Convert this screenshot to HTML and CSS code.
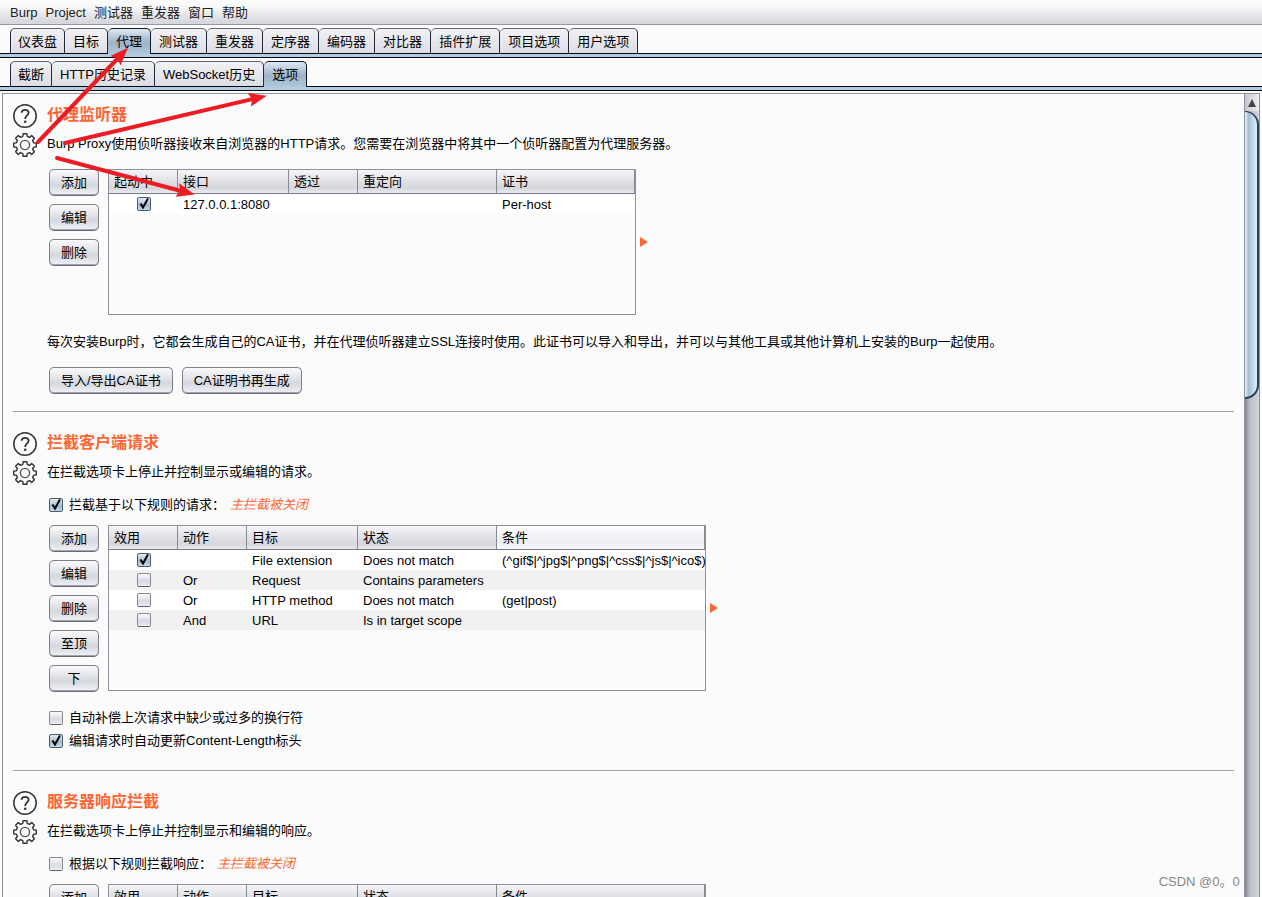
FILE: index.html
```html
<!DOCTYPE html>
<html lang="zh-CN">
<head>
<meta charset="utf-8">
<title>Burp</title>
<link rel="stylesheet" href="styles.css">
</head>
<body>
<svg class="symbols" aria-hidden="true">
  <symbol id="help" viewBox="-12 -12 24 24">
    <circle r="11.2" fill="none" stroke="#333" stroke-width="1.5"/>
    <path d="M-3.4 -3.2C-3.4 -7.2 3.6 -7.2 3.6 -3.2C3.6 -.6 .2 -.4 .2 3" fill="none" stroke="#333" stroke-width="1.8"/>
    <circle cx=".2" cy="5.8" r="1.3" fill="#333"/>
  </symbol>
  <symbol id="gear" viewBox="-12 -12 24 24">
    <path d="M-2.2 -8.6L-1.9 -11.3H1.9L2.2 -8.6L4.5 -7.6L6.7 -9.4L9.4 -6.7L7.6 -4.5L8.6 -2.2L11.3 -1.9V1.9L8.6 2.2L7.6 4.5L9.4 6.7L6.7 9.4L4.5 7.6L2.2 8.6L1.9 11.3H-1.9L-2.2 8.6L-4.5 7.6L-6.7 9.4L-9.4 6.7L-7.6 4.5L-8.6 2.2L-11.3 1.9V-1.9L-8.6 -2.2L-7.6 -4.5L-9.4 -6.7L-6.7 -9.4L-4.5 -7.6Z" fill="none" stroke="#333" stroke-width="1.4" stroke-linejoin="round"/>
    <circle r="4.6" fill="none" stroke="#555" stroke-width="1.4"/>
  </symbol>
</svg>

<div class="app">
  <nav class="menu">
    <button>Burp</button><button>Project</button><button>测试器</button><button>重发器</button><button>窗口</button><button>帮助</button>
  </nav>
  <nav class="tabs">
    <button class="tab">仪表盘</button><button class="tab">目标</button><button class="tab selected">代理</button><button class="tab">测试器</button><button class="tab">重发器</button><button class="tab">定序器</button><button class="tab">编码器</button><button class="tab">对比器</button><button class="tab">插件扩展</button><button class="tab">项目选项</button><button class="tab">用户选项</button>
  </nav>
  <nav class="tabs">
    <button class="tab">截断</button><button class="tab">HTTP历史记录</button><button class="tab">WebSocket历史</button><button class="tab selected">选项</button>
  </nav>

  <div class="panel">
    <main class="content">
      <section class="group">
        <div class="tools">
          <button class="tool" aria-label="帮助"><svg><use href="#help"/></svg></button>
          <button class="tool" aria-label="设置"><svg><use href="#gear"/></svg></button>
        </div>
        <div class="body">
          <h2>代理监听器</h2>
          <p class="desc">Burp Proxy使用侦听器接收来自浏览器的HTTP请求。您需要在浏览器中将其中一个侦听器配置为代理服务器。</p>
          <div class="editor listeners">
            <div class="actions"><button class="btn">添加</button><button class="btn">编辑</button><button class="btn">删除</button></div>
            <div class="grid">
              <table>
                <colgroup><col class="c69"><col class="c111"><col class="c69"><col class="c139"><col></colgroup>
                <thead><tr><th>起动中</th><th>接口</th><th>透过</th><th>重定向</th><th>证书</th></tr></thead>
                <tbody><tr><td class="mark"><input type="checkbox" aria-label="起动中" checked></td><td>127.0.0.1:8080</td><td></td><td></td><td>Per-host</td></tr></tbody>
              </table>
            </div>
            <svg class="arrow" viewBox="0 0 8 10"><path d="M0 0L8 5L0 10Z" fill="#ff6633"/></svg>
          </div>
          <p class="note">每次安装Burp时，它都会生成自己的CA证书，并在代理侦听器建立SSL连接时使用。此证书可以导入和导出，并可以与其他工具或其他计算机上安装的Burp一起使用。</p>
          <div class="buttons"><button class="btn">导入/导出CA证书</button><button class="btn">CA证明书再生成</button></div>
        </div>
      </section>

      <section class="group">
        <div class="tools">
          <button class="tool" aria-label="帮助"><svg><use href="#help"/></svg></button>
          <button class="tool" aria-label="设置"><svg><use href="#gear"/></svg></button>
        </div>
        <div class="body">
          <h2>拦截客户端请求</h2>
          <p class="desc">在拦截选项卡上停止并控制显示或编辑的请求。</p>
          <div class="master"><label class="check"><input type="checkbox" checked>拦截基于以下规则的请求：</label><em>主拦截被关闭</em></div>
          <div class="editor rules">
            <div class="actions"><button class="btn">添加</button><button class="btn">编辑</button><button class="btn">删除</button><button class="btn">至顶</button><button class="btn">下</button></div>
            <div class="grid">
              <table>
                <colgroup><col class="c69"><col class="c69"><col class="c111"><col class="c139"><col></colgroup>
                <thead><tr><th>效用</th><th>动作</th><th>目标</th><th>状态</th><th class="hover">条件</th></tr></thead>
                <tbody>
                  <tr><td class="mark"><input type="checkbox" aria-label="效用" checked></td><td></td><td>File extension</td><td>Does not match</td><td>(^gif$|^jpg$|^png$|^css$|^js$|^ico$)</td></tr>
                  <tr><td class="mark"><input type="checkbox" aria-label="效用"></td><td>Or</td><td>Request</td><td>Contains parameters</td><td></td></tr>
                  <tr><td class="mark"><input type="checkbox" aria-label="效用"></td><td>Or</td><td>HTTP method</td><td>Does not match</td><td>(get|post)</td></tr>
                  <tr><td class="mark"><input type="checkbox" aria-label="效用"></td><td>And</td><td>URL</td><td>Is in target scope</td><td></td></tr>
                </tbody>
              </table>
            </div>
            <svg class="arrow" viewBox="0 0 8 10"><path d="M0 0L8 5L0 10Z" fill="#ff6633"/></svg>
          </div>
          <div class="options">
            <label class="check"><input type="checkbox">自动补偿上次请求中缺少或过多的换行符</label>
            <label class="check"><input type="checkbox" checked>编辑请求时自动更新Content-Length标头</label>
          </div>
        </div>
      </section>

      <section class="group">
        <div class="tools">
          <button class="tool" aria-label="帮助"><svg><use href="#help"/></svg></button>
          <button class="tool" aria-label="设置"><svg><use href="#gear"/></svg></button>
        </div>
        <div class="body">
          <h2>服务器响应拦截</h2>
          <p class="desc">在拦截选项卡上停止并控制显示和编辑的响应。</p>
          <div class="master"><label class="check"><input type="checkbox">根据以下规则拦截响应：</label><em>主拦截被关闭</em></div>
          <div class="editor rules">
            <div class="actions"><button class="btn">添加</button></div>
            <div class="grid">
              <table>
                <colgroup><col class="c69"><col class="c69"><col class="c111"><col class="c139"><col></colgroup>
                <thead><tr><th>效用</th><th>动作</th><th>目标</th><th>状态</th><th>条件</th></tr></thead>
              </table>
            </div>
          </div>
        </div>
      </section>
    </main>
    <div class="scroll">
      <button class="up" aria-label="向上滚动"><svg viewBox="0 0 8 8"><path d="M4 0L8 8H0Z" fill="#444"/></svg></button>
      <div class="track"><div class="thumb"></div></div>
    </div>
  </div>
</div>

<svg class="marks" viewBox="0 0 300 210" aria-hidden="true">
  <defs>
    <marker id="head" viewBox="0 0 18 14" refX="8" refY="7" markerWidth="18" markerHeight="14" markerUnits="userSpaceOnUse" orient="auto"><path d="M0 0L18 7L0 14L3 7Z" fill="#ed1c24"/></marker>
  </defs>
  <g stroke="#ed1c24" stroke-width="4" stroke-linecap="round">
    <line x1="38" y1="142" x2="121" y2="55" marker-end="url(#head)"/>
    <line x1="65" y1="143" x2="257" y2="98" marker-end="url(#head)"/>
    <line x1="57" y1="158" x2="185" y2="192" marker-end="url(#head)"/>
  </g>
</svg>
<div class="watermark">CSDN @0。0 ;</div>
</body>
</html>
```
FILE: styles.css
```css
* { box-sizing: border-box; }

body, button, input {
  font-family: "Liberation Sans", "Noto Sans CJK SC", sans-serif;
  font-size: 13px;
  line-height: 20px;
  color: #000;
}

body { margin: 0; background: #fbfbfb; overflow: hidden; }
button { margin: 0; padding: 0; border: 0; background: none; white-space: nowrap; }
h2, p { margin: 0; }
.symbols { position: absolute; width: 0; height: 0; }

.app { display: flex; flex-direction: column; height: 100vh; }

.menu {
  display: flex;
  gap: 8px;
  height: 25px;
  padding: 3px 10px 1px;
  border-bottom: 1px solid #9297a1;
  background: linear-gradient(#fafcfb, #f8f8f9 30%, #d7d8de 90%);
}
.menu button { color: #222; }

.tabs {
  display: flex;
  flex: none;
  height: 33px;
  padding: 3px 10px 0;
  background: linear-gradient(#000818, #000818) 0 28px / 100% 1px no-repeat,
    linear-gradient(#000818, #000818) 0 32px / 100% 1px no-repeat,
    linear-gradient(#b6cbdd, #b6cbdd) 0 28px / 100% 4px no-repeat;
}
.tab {
  height: 25px;
  padding: 1px 8px 0;
  border: 1px solid #23293a;
  border-width: 1px 1px 0 0;
  border-top-color: #62666e;
  border-radius: 5px 5px 0 0;
  background: linear-gradient(#f2f2f5, #dcdde3);
}
.tab:first-child { border-left-width: 1px; padding: 1px 7px 0; }
.tab.selected {
  height: 26px;
  padding-bottom: 1px;
  border-color: #0c1a2c;
  background: linear-gradient(#dfe8f0, #9db3c8 55%, #b0c6da);
}

.panel {
  display: flex;
  flex: 1;
  min-height: 0;
  margin: 2px 2px 0;
  border: 1px solid #8d919b;
  border-bottom: 0;
}
.content { flex: 1; min-width: 0; overflow: hidden; padding: 10px 10px 0; }

.group {
  display: flex;
  gap: 10px;
  padding-bottom: 17px;
  border-bottom: 1px solid #a2a5ae;
  margin-bottom: 20px;
}
.group:nth-child(2) { padding-bottom: 19px; }
.tools { display: flex; flex-direction: column; gap: 5px; }
.tool, .tool svg { display: block; width: 24px; height: 24px; }
.body { flex: 1; min-width: 0; padding-top: 1px; }
.body h2 { font-size: 16px; line-height: 20px; color: #ff6633; }
.desc { margin-top: 9px; }
.note { margin: 17px 0 15px; }
.master { display: flex; gap: 5px; margin-top: 13px; }
.master em { color: #ff6633; }

.check { display: flex; align-items: center; gap: 6px; padding-left: 2px; }
.options { display: flex; flex-direction: column; gap: 3px; margin-top: 17px; }

input[type="checkbox"] {
  appearance: none;
  flex: none;
  width: 14px;
  height: 14px;
  margin: 0;
  border: 1px solid #858a94;
  border-bottom-color: #5e636d;
  border-radius: 2px;
  background: linear-gradient(#fbfbfd, #d8dae1 60%, #eceef4);
}
input[type="checkbox"]:checked {
  border-color: #4b5c70;
  background: url("data:image/svg+xml,%3Csvg xmlns='http://www.w3.org/2000/svg' viewBox='0 0 12 12'%3E%3Cpath d='M2.5 5.5L5 9.5L10 .5' fill='none' stroke='black' stroke-width='2'/%3E%3C/svg%3E") center / 12px no-repeat,
    linear-gradient(#e2ebf3, #a5bbd0 60%, #c3d8ea);
}

.editor { display: flex; }
.listeners { height: 146px; margin-top: 15px; }
.rules { height: 166px; margin-top: 10px; }
.actions { display: flex; flex-direction: column; gap: 8px; width: 50px; margin: 0 9px 0 2px; }
.btn {
  flex: none;
  height: 27px;
  padding: 1px 11px 0;
  border: 1px solid #7c8089;
  border-bottom-color: #666b76;
  border-radius: 5px;
  box-shadow: inset 0 -1px #a0a4ae;
  background: linear-gradient(#fafafc, #e3e4e9 40%, #d5d7de 60%, #eff1f7);
}
.buttons { display: flex; gap: 9px; padding-left: 2px; }

.grid { border: 1px solid #8d919b; }
.listeners .grid { width: 528px; }
.rules .grid { width: 598px; }
.grid table { width: 100%; table-layout: fixed; border-collapse: separate; border-spacing: 0; }
.grid th, .grid td { padding: 0 0 0 5px; font-weight: normal; text-align: left; white-space: nowrap; }
.grid th {
  height: 24px;
  border-right: 1px solid #858a94;
  border-bottom: 1px solid #747984;
  background: linear-gradient(#f6f6f9, #dfe0e5 50%, #d6d7dd 80%, #eaecf3);
}
.grid th.hover { background: linear-gradient(#fdfdfe, #ecedf2 70%, #f8f9fd); }
.grid td { height: 20px; padding-top: 2px; line-height: 18px; }
.grid tbody tr { background: #fff; }
.grid tbody tr:nth-child(even) { background: #f1f1f1; }
.grid td.mark { padding: 0; text-align: center; }
.mark input { display: block; margin: 0 auto; }
.c69 { width: 69px; }
.c111 { width: 111px; }
.c139 { width: 139px; }
.arrow { flex: none; align-self: center; width: 8px; height: 10px; margin-left: 4px; }

.scroll {
  display: flex;
  flex-direction: column;
  width: 15px;
  border-left: 1px solid #8d919b;
}
.up { height: 17px; background: linear-gradient(90deg, #c5c8d0, #efeff3); }
.up svg { display: block; width: 8px; height: 8px; margin: 0 auto; }
.track { flex: 1; background: linear-gradient(90deg, #85888f, #bcbec5 35%, #d5d6dd); }
.thumb {
  height: 36.6%;
  border: 1px solid #24415b;
  border-width: 1px 2px 2px 0;
  border-radius: 0 14px 14px 0;
  background: linear-gradient(90deg, #eef4f8, #a4bcd2 30%, #c4d8e8 65%, #dcf2fa);
}

.marks { position: absolute; top: 0; left: 0; width: 300px; height: 210px; pointer-events: none; }
.watermark { position: absolute; right: 15px; bottom: 5px; color: #888; }
```
